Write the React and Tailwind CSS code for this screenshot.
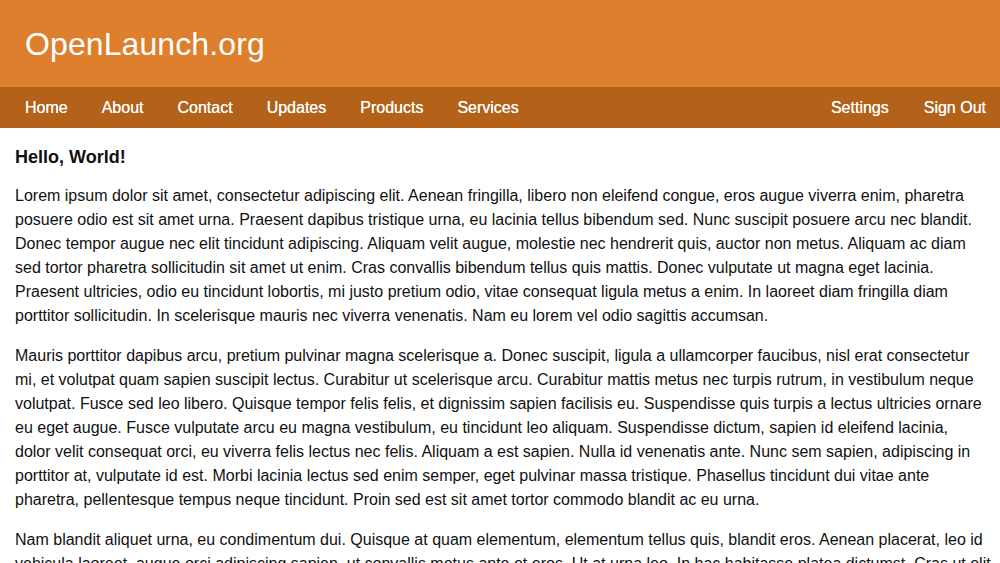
import React from "react";

const p1 = [
  "Lorem ipsum dolor sit amet, consectetur adipiscing elit. Aenean fringilla, libero non eleifend congue, eros augue viverra enim, pharetra",
  "posuere odio est sit amet urna. Praesent dapibus tristique urna, eu lacinia tellus bibendum sed. Nunc suscipit posuere arcu nec blandit.",
  "Donec tempor augue nec elit tincidunt adipiscing. Aliquam velit augue, molestie nec hendrerit quis, auctor non metus. Aliquam ac diam",
  "sed tortor pharetra sollicitudin sit amet ut enim. Cras convallis bibendum tellus quis mattis. Donec vulputate ut magna eget lacinia.",
  "Praesent ultricies, odio eu tincidunt lobortis, mi justo pretium odio, vitae consequat ligula metus a enim. In laoreet diam fringilla diam",
  "porttitor sollicitudin. In scelerisque mauris nec viverra venenatis. Nam eu lorem vel odio sagittis accumsan.",
];

const p2 = [
  "Mauris porttitor dapibus arcu, pretium pulvinar magna scelerisque a. Donec suscipit, ligula a ullamcorper faucibus, nisl erat consectetur",
  "mi, et volutpat quam sapien suscipit lectus. Curabitur ut scelerisque arcu. Curabitur mattis metus nec turpis rutrum, in vestibulum neque",
  "volutpat. Fusce sed leo libero. Quisque tempor felis felis, et dignissim sapien facilisis eu. Suspendisse quis turpis a lectus ultricies ornare",
  "eu eget augue. Fusce vulputate arcu eu magna vestibulum, eu tincidunt leo aliquam. Suspendisse dictum, sapien id eleifend lacinia,",
  "dolor velit consequat orci, eu viverra felis lectus nec felis. Aliquam a est sapien. Nulla id venenatis ante. Nunc sem sapien, adipiscing in",
  "porttitor at, vulputate id est. Morbi lacinia lectus sed enim semper, eget pulvinar massa tristique. Phasellus tincidunt dui vitae ante",
  "pharetra, pellentesque tempus neque tincidunt. Proin sed est sit amet tortor commodo blandit ac eu urna.",
];

const p3 = [
  "Nam blandit aliquet urna, eu condimentum dui. Quisque at quam elementum, elementum tellus quis, blandit eros. Aenean placerat, leo id",
  "vehicula laoreet, augue orci adipiscing sapien, ut convallis metus ante et eros. Ut at urna leo. In hac habitasse platea dictumst. Cras ut elit",
  "at magna porta faucibus. Integer vitae erat vel mi tincidunt tincidunt non sed nunc. Vestibulum ante ipsum primis in faucibus orci luctus.",
];

function Para({ lines }) {
  return (
    <p className="mb-4 whitespace-nowrap">
      {lines.map((l, i) => (
        <React.Fragment key={i}>
          {l}
          {i < lines.length - 1 && <br />}
        </React.Fragment>
      ))}
    </p>
  );
}

const left = ["Home", "About", "Contact", "Updates", "Products", "Services"];
const right = ["Settings", "Sign Out"];

export default function App() {
  return (
    <div
      className="w-[1000px] h-[563px] overflow-hidden bg-white text-[#111]"
      style={{ fontFamily: '"Liberation Sans", Arial, Helvetica, sans-serif' }}
    >
      <header className="h-[87px] bg-[#dd7f2c] flex items-center px-[25px]">
        <h1 className="text-[32px] leading-none text-white pt-[1px] tracking-[0.1px]">OpenLaunch.org</h1>
      </header>
      <nav className="h-[41px] bg-[#b4621a] flex items-center text-white text-[16px] pl-[25px] pr-[14px]">
        <ul className="flex gap-[34px]">
          {left.map((n) => (
            <li key={n}>
              <a className="[text-shadow:0_0_0.5px_#fff]">{n}</a>
            </li>
          ))}
        </ul>
        <ul className="flex gap-[35px] ml-auto">
          {right.map((n) => (
            <li key={n}>
              <a className="[text-shadow:0_0_0.5px_#fff]">{n}</a>
            </li>
          ))}
        </ul>
      </nav>
      <main className="px-[15px] pt-[17px] text-[16px] leading-[24px]">
        <h2 className="text-[18px] font-bold leading-[24px] mb-[15px]">Hello, World!</h2>
        <Para lines={p1} />
        <Para lines={p2} />
        <Para lines={p3} />
      </main>
    </div>
  );
}
